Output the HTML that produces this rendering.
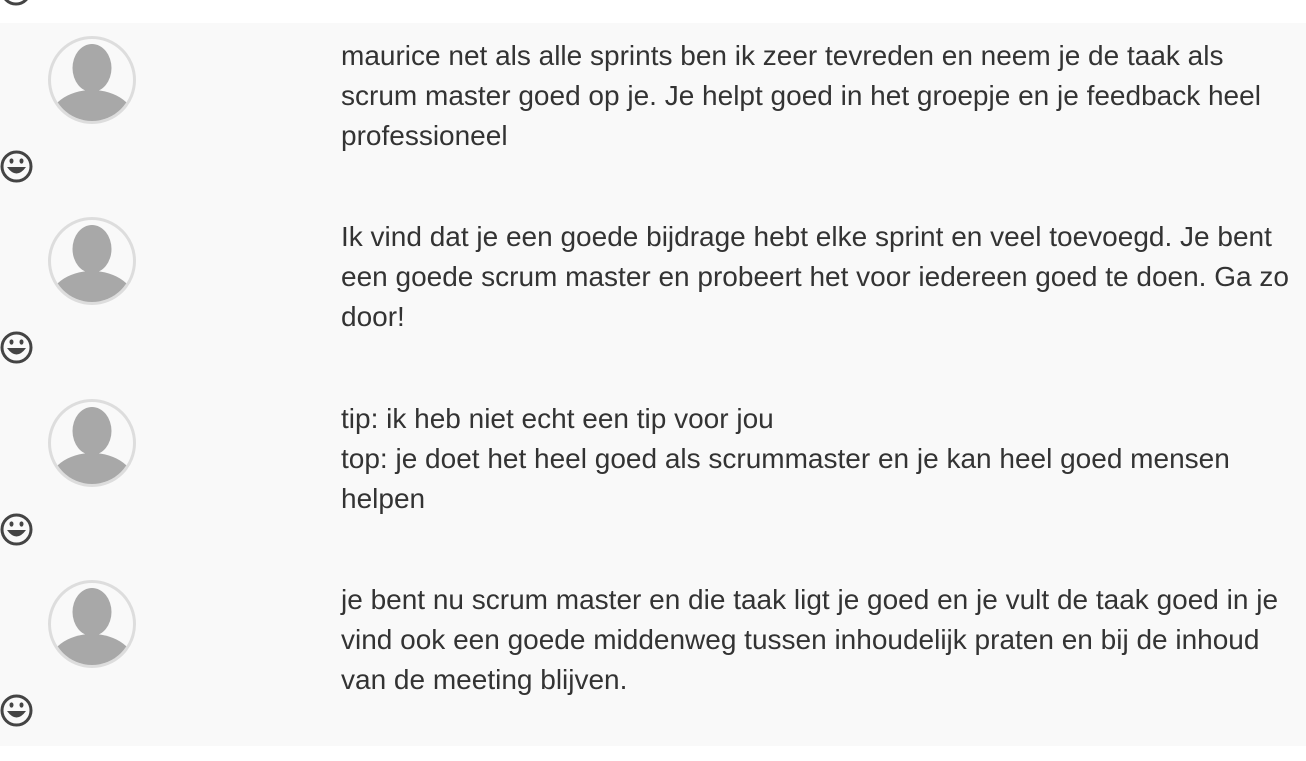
<!DOCTYPE html>
<html><head><meta charset="utf-8"><style>
body{margin:0;width:1306px;height:746px;overflow:hidden;background:#fff;font-family:"Liberation Sans",sans-serif;}
.bg{position:absolute;left:0;top:23px;width:1306px;height:723px;background:#f9f9f9;}
.row{position:absolute;left:0;width:1306px;height:181px;}
.av{position:absolute;left:48px;top:0;width:82px;height:82px;border:3px solid #ddd;border-radius:50%;overflow:hidden;background:#f9f9f9;}
.txt{position:absolute;left:341px;top:0px;width:960px;font-size:28px;line-height:40px;color:#333;}
.sm{position:absolute;left:0;top:114px;}
</style></head><body>
<div class="bg"></div>
<svg style="position:absolute;left:0;top:-26px" width="32" height="32" viewBox="0 0 32 32"><circle cx="16" cy="16" r="14" fill="none" stroke="#444" stroke-width="3"/></svg>
<div class="row" style="top:36px">
<div class="av"><svg width="82" height="82" viewBox="0 0 82 82"><ellipse cx="41" cy="29" rx="19.5" ry="24" fill="#a8a8a8"/><ellipse cx="41" cy="84" rx="44" ry="33" fill="#a8a8a8"/></svg></div>
<div class="txt">maurice net als alle sprints ben ik zeer tevreden en neem je de taak als scrum master goed op je. Je helpt goed in het groepje en je feedback heel professioneel</div>
<svg class="sm" width="33" height="33" viewBox="0 0 33 33"><circle cx="16.5" cy="16.5" r="14.5" fill="none" stroke="#444" stroke-width="3"/><ellipse cx="11.5" cy="11" rx="2" ry="2.6" fill="#444"/><ellipse cx="21.5" cy="11" rx="2" ry="2.6" fill="#444"/><path d="M7 17 Q16.5 30 26 17 Z" fill="#444"/></svg>
</div>
<div class="row" style="top:217px">
<div class="av"><svg width="82" height="82" viewBox="0 0 82 82"><ellipse cx="41" cy="29" rx="19.5" ry="24" fill="#a8a8a8"/><ellipse cx="41" cy="84" rx="44" ry="33" fill="#a8a8a8"/></svg></div>
<div class="txt">Ik vind dat je een goede bijdrage hebt elke sprint en veel toevoegd. Je bent een goede scrum master en probeert het voor iedereen goed te doen. Ga zo door!</div>
<svg class="sm" width="33" height="33" viewBox="0 0 33 33"><circle cx="16.5" cy="16.5" r="14.5" fill="none" stroke="#444" stroke-width="3"/><ellipse cx="11.5" cy="11" rx="2" ry="2.6" fill="#444"/><ellipse cx="21.5" cy="11" rx="2" ry="2.6" fill="#444"/><path d="M7 17 Q16.5 30 26 17 Z" fill="#444"/></svg>
</div>
<div class="row" style="top:399px">
<div class="av"><svg width="82" height="82" viewBox="0 0 82 82"><ellipse cx="41" cy="29" rx="19.5" ry="24" fill="#a8a8a8"/><ellipse cx="41" cy="84" rx="44" ry="33" fill="#a8a8a8"/></svg></div>
<div class="txt">tip: ik heb niet echt een tip voor jou<br>top: je doet het heel goed als scrummaster en je kan heel goed mensen helpen</div>
<svg class="sm" width="33" height="33" viewBox="0 0 33 33"><circle cx="16.5" cy="16.5" r="14.5" fill="none" stroke="#444" stroke-width="3"/><ellipse cx="11.5" cy="11" rx="2" ry="2.6" fill="#444"/><ellipse cx="21.5" cy="11" rx="2" ry="2.6" fill="#444"/><path d="M7 17 Q16.5 30 26 17 Z" fill="#444"/></svg>
</div>
<div class="row" style="top:580px">
<div class="av"><svg width="82" height="82" viewBox="0 0 82 82"><ellipse cx="41" cy="29" rx="19.5" ry="24" fill="#a8a8a8"/><ellipse cx="41" cy="84" rx="44" ry="33" fill="#a8a8a8"/></svg></div>
<div class="txt">je bent nu scrum master en die taak ligt je goed en je vult de taak goed in je vind ook een goede middenweg tussen inhoudelijk praten en bij de inhoud van de meeting blijven.</div>
<svg class="sm" width="33" height="33" viewBox="0 0 33 33"><circle cx="16.5" cy="16.5" r="14.5" fill="none" stroke="#444" stroke-width="3"/><ellipse cx="11.5" cy="11" rx="2" ry="2.6" fill="#444"/><ellipse cx="21.5" cy="11" rx="2" ry="2.6" fill="#444"/><path d="M7 17 Q16.5 30 26 17 Z" fill="#444"/></svg>
</div>
</body></html>
